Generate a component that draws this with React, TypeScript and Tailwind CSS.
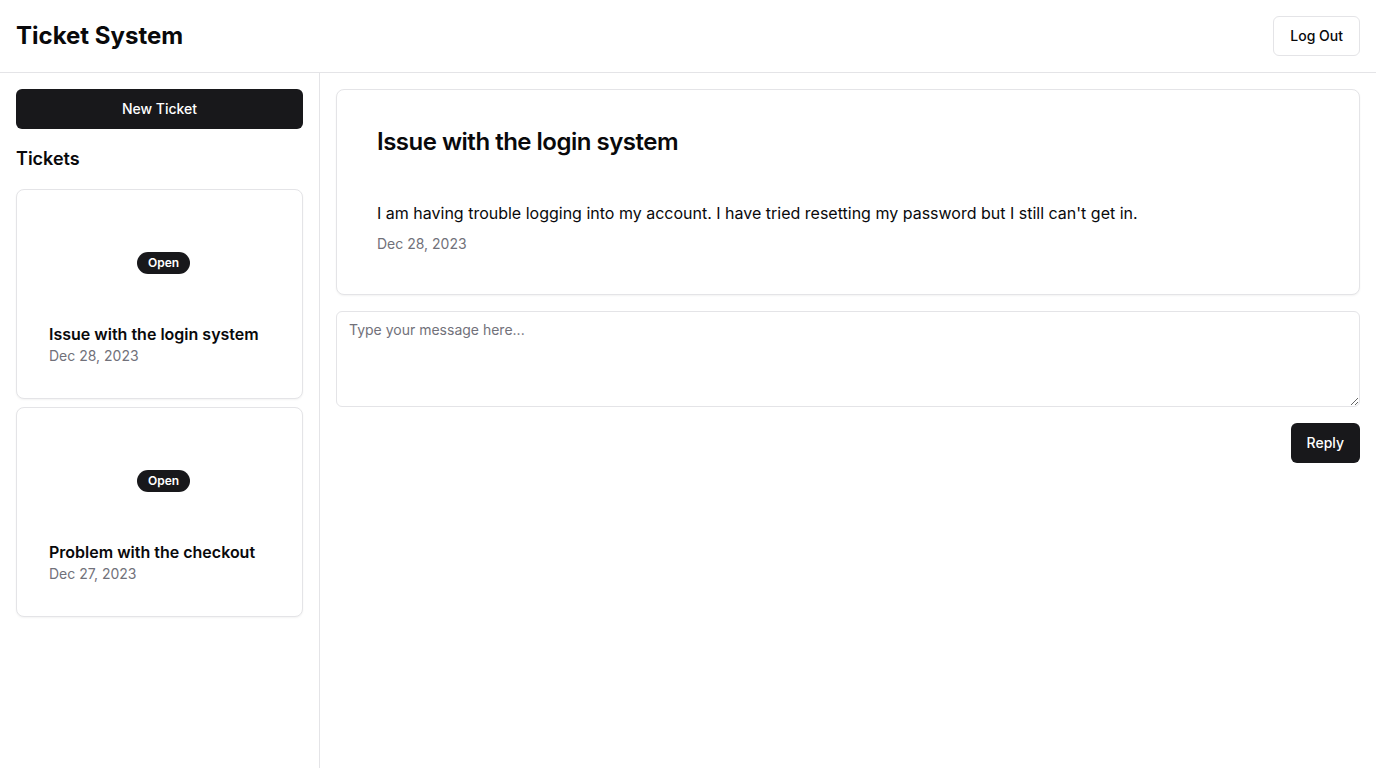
import React, { useState } from 'react';

interface Ticket {
  id: number;
  title: string;
  description: string;
  date: string;
  status: 'Open' | 'Closed';
}

const tickets: Ticket[] = [
  {
    id: 1,
    title: 'Issue with the login system',
    description: "I am having trouble logging into my account. I have tried resetting my password but I still can't get in.",
    date: 'Dec 28, 2023',
    status: 'Open',
  },
  {
    id: 2,
    title: 'Problem with the checkout',
    description: 'The checkout page keeps failing when I try to pay with my card.',
    date: 'Dec 27, 2023',
    status: 'Open',
  },
];

export default function App() {
  const [selectedId, setSelectedId] = useState(1);
  const [message, setMessage] = useState('');
  const selected = tickets.find((t) => t.id === selectedId) || tickets[0];

  return (
    <div className="h-screen flex flex-col bg-white text-[#09090b] font-['Inter','Noto_Sans',sans-serif]">
      <header className="h-[73px] flex items-center justify-between px-4 border-b border-[#e4e4e7] shrink-0">
        <h1 className="text-2xl font-bold">Ticket System</h1>
        <button className="h-10 px-4 rounded-md border border-[#e4e4e7] bg-white text-sm font-medium">Log Out</button>
      </header>

      <div className="flex flex-1 min-h-0">
        <aside className="w-80 shrink-0 border-r border-[#e4e4e7] p-4 overflow-y-auto">
          <button className="w-full h-10 rounded-md bg-[#18181b] text-white text-sm font-medium">New Ticket</button>
          <h2 className="mt-4 mb-4 text-lg font-semibold leading-7">Tickets</h2>
          <div className="flex flex-col gap-2">
            {tickets.map((ticket) => (
              <div
                key={ticket.id}
                onClick={() => setSelectedId(ticket.id)}
                className="h-[210px] rounded-lg border border-[#e4e4e7] bg-white shadow-xs cursor-pointer flex flex-col"
              >
                <div className="pt-[62px] flex justify-center pl-2">
                  <span className="h-[22px] inline-flex items-center rounded-full bg-[#18181b] px-[11px] text-xs font-semibold text-white">
                    {ticket.status}
                  </span>
                </div>
                <div className="mt-12 px-8">
                  <h3 className="text-base font-semibold leading-6">{ticket.title}</h3>
                  <p className="text-sm leading-5 text-[#71717a]">{ticket.date}</p>
                </div>
              </div>
            ))}
          </div>
        </aside>

        <main className="flex-1 p-4 overflow-y-auto">
          <div className="rounded-lg border border-[#e4e4e7] bg-white shadow-xs px-10 pt-10 pb-10">
            <h2 className="text-2xl font-semibold leading-6 tracking-[-0.5px]">{selected.title}</h2>
            <p className="mt-[47px] text-base leading-6">{selected.description}</p>
            <p className="mt-[9px] text-sm leading-5 text-[#71717a]">{selected.date}</p>
          </div>
          <textarea
            value={message}
            onChange={(e) => setMessage(e.target.value)}
            placeholder="Type your message here..."
            className="mt-4 block w-full h-24 rounded-md border border-[#e4e4e7] px-3 py-2 text-sm leading-5 placeholder:text-[#71717a] outline-none"
          />
          <div className="mt-4 flex justify-end">
            <button className="h-10 px-4 rounded-md bg-[#18181b] text-white text-sm font-medium">Reply</button>
          </div>
        </main>
      </div>
    </div>
  );
}
